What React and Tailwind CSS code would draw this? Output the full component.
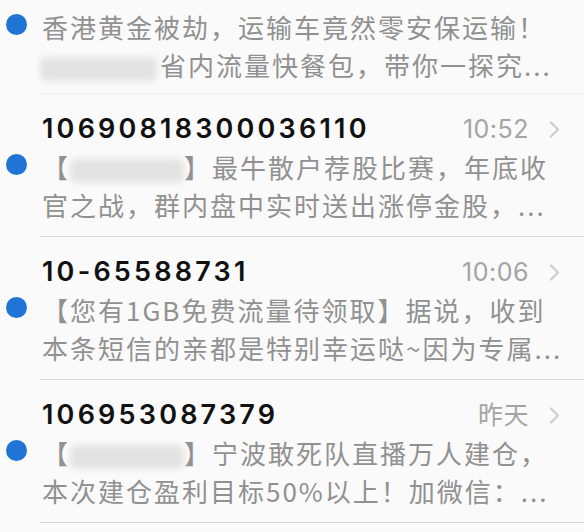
import React from "react";

const Dot = ({ top }) => (
  <div className="w-[40px] shrink-0">
    <div className={`ml-[6px] w-[21px] h-[21px] rounded-full bg-[#1f74d6] ${top}`} />
  </div>
);

const Blur = ({ w = "w-[114px]" }) => (
  <span className={`inline-block ${w} h-[24px] align-[-5px] rounded-[6px] bg-[#e3e3e3] blur-[3px]`} />
);

const Chevron = () => (
  <svg width="11" height="17" viewBox="0 0 11 17" className="shrink-0">
    <polyline points="2,1.5 9,8.5 2,15.5" fill="none" stroke="#cdcdd0" strokeWidth="2.2" strokeLinecap="round" strokeLinejoin="round" />
  </svg>
);

const body = "font-['Noto_Sans_CJK_SC',sans-serif] text-[26px] leading-[38px] tracking-[2px] text-[#919191] whitespace-nowrap";

const Row = ({ title, time, l1, l2 }) => (
  <div className="flex">
    <Dot top="mt-[60px]" />
    <div className="flex-1 pl-[2px] pt-[16px] pb-[12px] border-b border-[#d6d6d6]">
      <div className="flex items-center justify-between pr-[24px] h-[38px]">
        <span className="font-['Inter',sans-serif] font-semibold text-[27px] tracking-[3.2px] leading-[38px] text-[#111111]">
          {title}
        </span>
        <div className="flex items-center gap-[20px]">
          <span className="font-['Inter','Noto_Sans_CJK_SC',sans-serif] text-[25px] tracking-[0.5px] leading-[38px] text-[#a4a4a4]">
            {time}
          </span>
          <Chevron />
        </div>
      </div>
      <div className={body}>{l1}</div>
      <div className={body}>{l2}</div>
    </div>
  </div>
);

export default function App() {
  return (
    <div className="w-[584px] h-[532px] overflow-hidden bg-[#fafafa]">
      <div className="flex">
        <Dot top="mt-[14px]" />
        <div className="flex-1 pl-[2px] pt-[8px] pb-[9px] border-b border-[#f0f0f0]">
          <div className={body}>香港黄金被劫，运输车竟然零安保运输！</div>
          <div className={body}>
            <span className="inline-block -ml-[2px] mr-[3px]">
              <Blur w="w-[117px]" />
            </span>
            省内流量快餐包，带你一探究...
          </div>
        </div>
      </div>
      <Row
        title="10690818300036110"
        time="10:52"
        l1={
          <>
            【<Blur />】最牛散户荐股比赛，年底收
          </>
        }
        l2="官之战，群内盘中实时送出涨停金股，..."
      />
      <Row
        title="10-65588731"
        time="10:06"
        l1="【您有1GB免费流量待领取】据说，收到"
        l2="本条短信的亲都是特别幸运哒~因为专属..."
      />
      <Row
        title="106953087379"
        time="昨天"
        l1={
          <>
            【<Blur />】宁波敢死队直播万人建仓，
          </>
        }
        l2="本次建仓盈利目标50%以上！加微信：..."
      />
    </div>
  );
}
